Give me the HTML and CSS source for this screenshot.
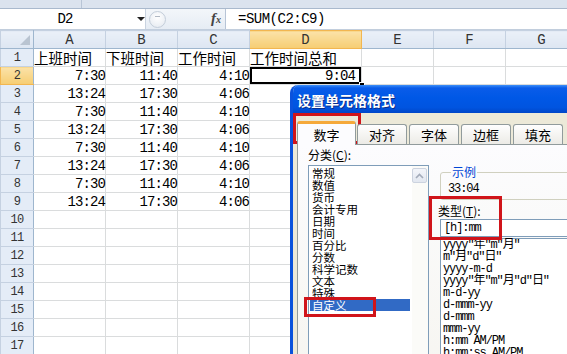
FILE: index.html
```html
<!DOCTYPE html>
<html lang="zh-CN">
  <head>
    <meta charset="UTF-8" />
    <meta name="viewport" content="width=device-width, initial-scale=1.0" />
    <title>工作时间总和 - 设置单元格格式</title>
    <link rel="stylesheet" href="styles.css">
  </head>
  <body>
    <section class="ribbon-edge"><span class="ribbon-sep"></span></section>

    <section class="formula-bar">
      <div class="name-box">
        <span class="name">D2</span>
        <span class="name-arrow"></span>
      </div>
      <div class="fb-tools">
        <span class="fb-round"><span class="fb-dash"></span></span>
        <span class="fx">f<span class="fx-x">x</span></span>
      </div>
      <div class="formula">=SUM(C2:C9)</div>
    </section>

    <table class="sheet">
      <colgroup>
        <col class="w-row" />
        <col class="w-std" />
        <col class="w-std" />
        <col class="w-std" />
        <col class="w-wide" />
        <col class="w-std" />
        <col class="w-std" />
        <col class="w-std" />
      </colgroup>
      <tr class="col-heads">
        <th class="corner"><span class="corner-tri"></span></th>
        <th>A</th><th>B</th><th>C</th><th class="hl">D</th><th>E</th><th>F</th><th>G</th>
      </tr>
      <tr>
        <th>1</th>
        <td class="cjk">上班时间</td><td class="cjk">下班时间</td><td class="cjk">工作时间</td><td class="cjk">工作时间总和</td><td></td><td></td><td></td>
      </tr>
      <tr>
        <th class="hl">2</th>
        <td class="num">7:30</td><td class="num">11:40</td><td class="num">4:10</td><td class="num active">9:04<span class="fill-handle"></span></td><td></td><td></td><td></td>
      </tr>
      <tr>
        <th>3</th>
        <td class="num">13:24</td><td class="num">17:30</td><td class="num">4:06</td><td></td><td></td><td></td><td></td>
      </tr>
      <tr>
        <th>4</th>
        <td class="num">7:30</td><td class="num">11:40</td><td class="num">4:10</td><td></td><td></td><td></td><td></td>
      </tr>
      <tr>
        <th>5</th>
        <td class="num">13:24</td><td class="num">17:30</td><td class="num">4:06</td><td></td><td></td><td></td><td></td>
      </tr>
      <tr>
        <th>6</th>
        <td class="num">7:30</td><td class="num">11:40</td><td class="num">4:10</td><td></td><td></td><td></td><td></td>
      </tr>
      <tr>
        <th>7</th>
        <td class="num">13:24</td><td class="num">17:30</td><td class="num">4:06</td><td></td><td></td><td></td><td></td>
      </tr>
      <tr>
        <th>8</th>
        <td class="num">7:30</td><td class="num">11:40</td><td class="num">4:10</td><td></td><td></td><td></td><td></td>
      </tr>
      <tr>
        <th>9</th>
        <td class="num">13:24</td><td class="num">17:30</td><td class="num">4:06</td><td></td><td></td><td></td><td></td>
      </tr>
      <tr><th>10</th><td></td><td></td><td></td><td></td><td></td><td></td><td></td></tr>
      <tr><th>11</th><td></td><td></td><td></td><td></td><td></td><td></td><td></td></tr>
      <tr><th>12</th><td></td><td></td><td></td><td></td><td></td><td></td><td></td></tr>
      <tr><th>13</th><td></td><td></td><td></td><td></td><td></td><td></td><td></td></tr>
      <tr><th>14</th><td></td><td></td><td></td><td></td><td></td><td></td><td></td></tr>
      <tr><th>15</th><td></td><td></td><td></td><td></td><td></td><td></td><td></td></tr>
      <tr><th>16</th><td></td><td></td><td></td><td></td><td></td><td></td><td></td></tr>
      <tr><th>17</th><td></td><td></td><td></td><td></td><td></td><td></td><td></td></tr>
    </table>

    <!-- Format Cells dialog, floating over the sheet -->
    <div class="dialog">
      <div class="dlg-title">设置单元格格式</div>
      <div class="dlg-body">
        <div class="tabs">
          <div class="tab on">数字</div>
          <div class="tab">对齐</div>
          <div class="tab">字体</div>
          <div class="tab">边框</div>
          <div class="tab">填充</div>
        </div>
        <div class="page">
          <div class="cat-label">分类(<u>C</u>):</div>
          <div class="page-cols">
            <div class="cat-list">
              <ul class="cat-items">
                <li>常规</li>
                <li>数值</li>
                <li>货币</li>
                <li>会计专用</li>
                <li>日期</li>
                <li>时间</li>
                <li>百分比</li>
                <li>分数</li>
                <li>科学记数</li>
                <li>文本</li>
                <li>特殊</li>
                <li class="sel">自定义</li>
              </ul>
              <div class="vscroll">
                <div class="sb-up">
                  <svg width="9" height="6" viewBox="0 0 9 6"><path d="M1 5 L4.5 1.5 L8 5" fill="none" stroke="#A3ABBA" stroke-width="1.6"/></svg>
                </div>
              </div>
            </div>
            <div class="fmt-col">
              <fieldset class="sample">
                <legend>示例</legend>
                <div class="sample-val">33:04</div>
              </fieldset>
              <div class="type-label">类型(<u>T</u>):</div>
              <div class="type-input">[h]:mm</div>
              <ul class="fmt-list">
                <li>yyyy"年"m"月"</li>
                <li>m"月"d"日"</li>
                <li>yyyy-m-d</li>
                <li>yyyy"年"m"月"d"日"</li>
                <li>m-d-yy</li>
                <li>d-mmm-yy</li>
                <li>d-mmm</li>
                <li>mmm-yy</li>
                <li>h:mm AM/PM</li>
                <li>h:mm:ss AM/PM</li>
              </ul>
            </div>
          </div>
        </div>
      </div>
    </div>

    <!-- red annotation boxes -->
    <div class="mark mark-tab"></div>
    <div class="mark mark-type"></div>
    <div class="mark mark-custom"></div>
  </body>
</html>
```

FILE: styles.css
```css
* {
  margin: 0;
  padding: 0;
  box-sizing: border-box;
}

body {
  width: 567px;
  height: 354px;
  overflow: hidden;
  position: relative;
  background: #fff;
  font-family: "Liberation Mono", "Noto Sans CJK SC", monospace;
  color: #000;
}

/* top edge of the ribbon */
.ribbon-edge {
  height: 9px;
  background: #dbe3ee;
  border-bottom: 1px solid #a9b9cd;
}
.ribbon-sep {
  display: block;
  width: 82px;
  height: 8px;
  border-right: 1px solid #b8c5d6;
}

/* formula bar */
.formula-bar {
  display: flex;
  height: 21px;
  background: #e9eef5;
  border-bottom: 1px solid #c2cedd;
}
.name-box {
  width: 146px;
  background: #fff;
  position: relative;
  border-right: 1px solid #c9d3e0;
}
.name {
  display: block;
  width: 130px;
  text-align: center;
  font-size: 14px;
  line-height: 20px;
  letter-spacing: -0.9px;
}
.name-arrow {
  position: absolute;
  left: 137px;
  top: 8px;
  border-left: 4px solid transparent;
  border-right: 4px solid transparent;
  border-top: 4px solid #222;
}
.fb-tools {
  width: 79px;
  display: flex;
  align-items: center;
  justify-content: space-between;
  padding: 0 4px 0 3px;
  background: linear-gradient(#f3f6fa, #e6ecf4);
}
.fb-round {
  width: 17px;
  height: 17px;
  border-radius: 50%;
  border: 1px solid #c4ceda;
  background: radial-gradient(circle at 50% 35%, #ffffff, #e3e8ef);
  display: flex;
  align-items: center;
  justify-content: center;
}
.fb-dash {
  width: 5px;
  height: 1px;
  background: #b0b8c3;
  margin-bottom: 5px;
}
.fx {
  font-family: "Liberation Serif", serif;
  font-style: italic;
  font-weight: bold;
  font-size: 15px;
  color: #444;
  line-height: 18px;
}
.fx-x {
  font-size: 10px;
}
.formula {
  flex: 1;
  background: #fff;
  border-left: 1px solid #b7c4d6;
  padding-left: 12px;
  font-size: 14px;
  line-height: 20px;
  letter-spacing: -0.5px;
}

/* worksheet grid */
.sheet {
  border-collapse: collapse;
  table-layout: fixed;
  width: 577px;
}
.w-row { width: 33px; }
.w-std { width: 72px; }
.w-wide { width: 112px; }

.sheet tr {
  height: 18px;
}
.sheet td,
.sheet th {
  padding: 0;
  border: 1px solid #dadcdd;
  white-space: nowrap;
  line-height: 16px;
}
.sheet th {
  font-weight: normal;
  background: #e4ecf7;
  border-color: #c5d1e1;
  color: #333;
  text-align: center;
  font-size: 12px;
  letter-spacing: -0.6px;
}
.col-heads th {
  font-size: 14px;
  letter-spacing: 0;
  background: linear-gradient(#eaf0f8, #dde6f2);
  border-bottom-color: #9eb6ce;
}
.sheet tr th:first-child {
  border-right-color: #9eb6ce;
}
.sheet th.hl {
  background: linear-gradient(#fbe2a8, #f6cd72);
  border-color: #f2b650;
  color: #333;
}
.corner {
  position: relative;
}
.corner-tri {
  position: absolute;
  right: 3px;
  bottom: 3px;
  border-left: 10px solid transparent;
  border-bottom: 10px solid #b9c4d1;
}

.cjk {
  font-family: "Noto Sans CJK SC", sans-serif;
  font-size: 14.5px;
  padding-left: 3px;
  line-height: 16px;
}
.num {
  text-align: right;
  padding-right: 3px;
  padding-top: 2px;
  font-size: 14px;
  letter-spacing: -0.9px;
}
.sheet td.active {
  position: relative;
  box-shadow: inset 0 0 0 2px #000;
  padding-right: 6px;
}
.fill-handle {
  position: absolute;
  right: -4px;
  bottom: -4px;
  width: 6px;
  height: 6px;
  background: #000;
  border: 1px solid #fff;
}

/* Format Cells dialog (Windows XP look) */
.dialog {
  position: absolute;
  left: 290px;
  top: 85px;
  width: 310px;
  height: 290px;
  background: #ece9d8;
  border-left: 3px solid #0a52dc;
  border-top-left-radius: 8px;
  overflow: hidden;
  font-family: "Noto Sans CJK SC", sans-serif;
  font-size: 12px;
}
.dlg-title {
  height: 28px;
  padding-left: 4px;
  color: #fff;
  font-weight: bold;
  font-size: 14px;
  line-height: 30px;
  background: linear-gradient(#3d8ff8 0, #0a5ce9 3px, #0058e6 45%, #0054e0 80%, #0046c8 100%);
  text-shadow: 1px 1px 0 #0a2e8c;
}
.dlg-body {
  padding: 8px 0 0 4px;
}
.tabs {
  display: flex;
  align-items: flex-end;
  height: 23px;
  position: relative;
  z-index: 1;
}
.tab {
  width: 50px;
  height: 20px;
  margin-right: 2px;
  text-align: center;
  line-height: 19px;
  font-size: 13px;
  border: 1px solid #919b9c;
  border-bottom: none;
  border-radius: 3px 3px 0 0;
  background: linear-gradient(#fefefe, #ecebe6);
}
.tab.on {
  width: 59px;
  height: 24px;
  margin-right: 1px;
  margin-bottom: -1px;
  line-height: 22px;
  background: #fcfcfe;
  border-top: 3px solid #f5a93a;
}
.page {
  height: 240px;
  border: 1px solid #919b9c;
  background: linear-gradient(#fcfcfe, #f6f5f0);
  padding: 3px 0 0 10px;
}
.cat-label {
  line-height: 14px;
  height: 14px;
  margin-bottom: 3px;
}
.page-cols {
  display: flex;
}
.cat-list {
  width: 121px;
  height: 200px;
  border: 1px solid #7f9db9;
  background: #fff;
  display: flex;
}
.cat-items {
  list-style: none;
  flex: 1;
  padding-top: 1px;
  font-size: 11.5px;
}
.cat-items li {
  line-height: 12px;
  height: 12px;
  padding-left: 2px;
  margin: 0 2px 0 1px;
}
.cat-items li.sel {
  background: #316ac5;
  color: #fff;
}
.vscroll {
  width: 16px;
  background: #fbfbf8;
  padding: 2px 1px 0 0;
}
.sb-up {
  height: 15px;
  border: 1px solid #ccd3df;
  border-radius: 2px;
  background: linear-gradient(#f3f5fa, #e2e7f0);
  display: flex;
  align-items: center;
  justify-content: center;
}

.fmt-col {
  width: 150px;
  margin-left: 9px;
}
.sample {
  margin-left: 2px;
  border: 1px solid #d0d0bf;
  border-radius: 3px;
  padding: 0 0 4px 7px;
  height: 35px;
}
.sample legend {
  color: #0046d5;
  line-height: 14px;
  padding: 0 1px;
  margin-left: 3px;
}
.sample-val {
  font-family: "Liberation Mono", monospace;
  font-size: 12px;
  line-height: 12px;
  margin-top: 4px;
  letter-spacing: -1.1px;
}
.type-label {
  margin-top: 4px;
  line-height: 14px;
}
.type-input {
  margin: 1px 0 0 2px;
  height: 18px;
  border: 1px solid #7f9db9;
  background: #fff;
  padding-left: 3px;
  font-family: "Liberation Mono", "Noto Sans CJK SC", monospace;
  font-size: 12px;
  line-height: 16px;
  letter-spacing: -1.1px;
}
.fmt-list {
  list-style: none;
  margin: 1px 0 0 2px;
  height: 140px;
  border: 1px solid #7f9db9;
  background: #fff;
  padding: 0 0 0 2px;
  font-family: "Liberation Mono", "Noto Sans CJK SC", monospace;
  font-size: 12px;
  letter-spacing: -1.1px;
}
.fmt-list li {
  line-height: 12px;
  height: 12px;
}

/* red annotation rectangles */
.mark {
  position: absolute;
  border: 3px solid #d0141a;
}
.mark-tab {
  left: 293px;
  top: 113px;
  width: 68px;
  height: 31px;
}
.mark-type {
  left: 429px;
  top: 196px;
  width: 73px;
  height: 44px;
}
.mark-custom {
  left: 304px;
  top: 297px;
  width: 72px;
  height: 20px;
}
```
